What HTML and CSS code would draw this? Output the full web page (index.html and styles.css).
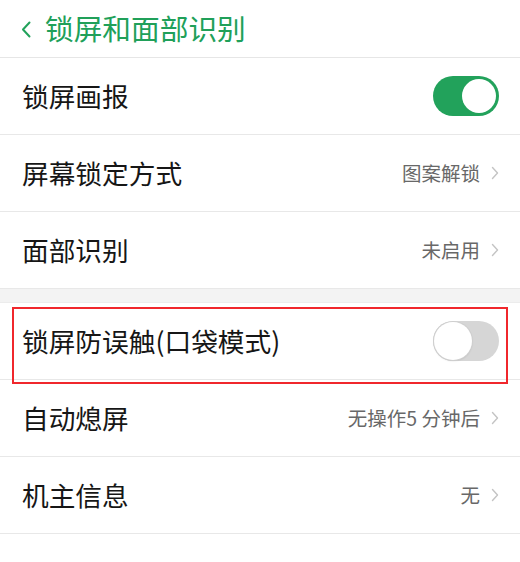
FILE: index.html
```html
<!DOCTYPE html>
<html lang="zh-CN">
<head>
<meta charset="utf-8">
<title>锁屏和面部识别</title>
<link rel="stylesheet" href="styles.css">
</head>
<body>
<div class="page">
  <header class="header">
    <svg class="back" width="10" height="17" viewBox="0 0 10 17"><path d="M8.5 1.5 L2 8.5 L8.5 15.5" fill="none" stroke="#22a25b" stroke-width="2" stroke-linecap="round" stroke-linejoin="round"/></svg>
    <h1 class="title">锁屏和面部识别</h1>
  </header>
  <div class="row">
    <span class="label">锁屏画报</span>
    <span class="switch on"><span class="knob"></span></span>
  </div>
  <div class="row">
    <span class="label">屏幕锁定方式</span>
    <span class="value">图案解锁<svg class="chev" width="8" height="14" viewBox="0 0 8 14"><path d="M1.5 1.5 L6.5 7 L1.5 12.5" fill="none" stroke="#c4c4c4" stroke-width="1.4" stroke-linecap="round" stroke-linejoin="round"/></svg></span>
  </div>
  <div class="row">
    <span class="label">面部识别</span>
    <span class="value">未启用<svg class="chev" width="8" height="14" viewBox="0 0 8 14"><path d="M1.5 1.5 L6.5 7 L1.5 12.5" fill="none" stroke="#c4c4c4" stroke-width="1.4" stroke-linecap="round" stroke-linejoin="round"/></svg></span>
  </div>
  <div class="gap"></div>
  <div class="row marked">
    <span class="label">锁屏防误触(口袋模式)</span>
    <span class="switch"><span class="knob"></span></span>
    <span class="mark"></span>
  </div>
  <div class="row">
    <span class="label">自动熄屏</span>
    <span class="value">无操作5 分钟后<svg class="chev" width="8" height="14" viewBox="0 0 8 14"><path d="M1.5 1.5 L6.5 7 L1.5 12.5" fill="none" stroke="#c4c4c4" stroke-width="1.4" stroke-linecap="round" stroke-linejoin="round"/></svg></span>
  </div>
  <div class="row">
    <span class="label">机主信息</span>
    <span class="value">无<svg class="chev" width="8" height="14" viewBox="0 0 8 14"><path d="M1.5 1.5 L6.5 7 L1.5 12.5" fill="none" stroke="#c4c4c4" stroke-width="1.4" stroke-linecap="round" stroke-linejoin="round"/></svg></span>
  </div>
</div>
</body>
</html>
```
FILE: styles.css
```css
html, body {
  margin: 0;
  padding: 0;
  background: #ffffff;
}
body {
  font-family: "Noto Sans CJK SC", "Noto Sans", sans-serif;
  color: #161616;
}
.page {
  width: 520px;
}
.header {
  height: 57px;
  border-bottom: 1px solid #e6e6e6;
  display: flex;
  align-items: center;
  padding-left: 21px;
  gap: 14px;
}
.back {
  display: block;
  margin-top: 1px;
}
.title {
  margin: 0;
  font-size: 28.7px;
  font-weight: 400;
  color: #20a059;
  line-height: 1;
}
.row {
  height: 76px;
  border-bottom: 1px solid #e8e8e8;
  display: flex;
  align-items: center;
  justify-content: space-between;
  padding: 0 21px 0 22px;
}
.label {
  font-size: 26.7px;
  line-height: 1;
  color: #161616;
}
.value {
  display: flex;
  align-items: center;
  gap: 11px;
  font-size: 19.5px;
  line-height: 1;
  color: #686868;
}
.chev {
  display: block;
}
.gap {
  height: 13px;
  background: #f3f3f3;
  border-bottom: 1px solid #ececec;
}
.switch {
  width: 66px;
  height: 40px;
  border-radius: 20px;
  background: #d6d6d6;
  position: relative;
  display: block;
}
.switch .knob {
  position: absolute;
  left: 1px;
  top: 1px;
  width: 38px;
  height: 38px;
  border-radius: 50%;
  background: #ffffff;
  box-shadow: 0 0 0 1px #cfcfcf, 0 1px 2px rgba(0,0,0,0.15);
}
.switch.on {
  background: #22a25b;
}
.switch.on .knob {
  left: auto;
  right: 3px;
  top: 3px;
  width: 34px;
  height: 34px;
  box-shadow: none;
}
.marked {
  position: relative;
}
.mark {
  position: absolute;
  left: 12px;
  top: 4px;
  width: 496px;
  height: 77px;
  border: 2px solid #f0272c;
  box-sizing: border-box;
  pointer-events: none;
}
```
